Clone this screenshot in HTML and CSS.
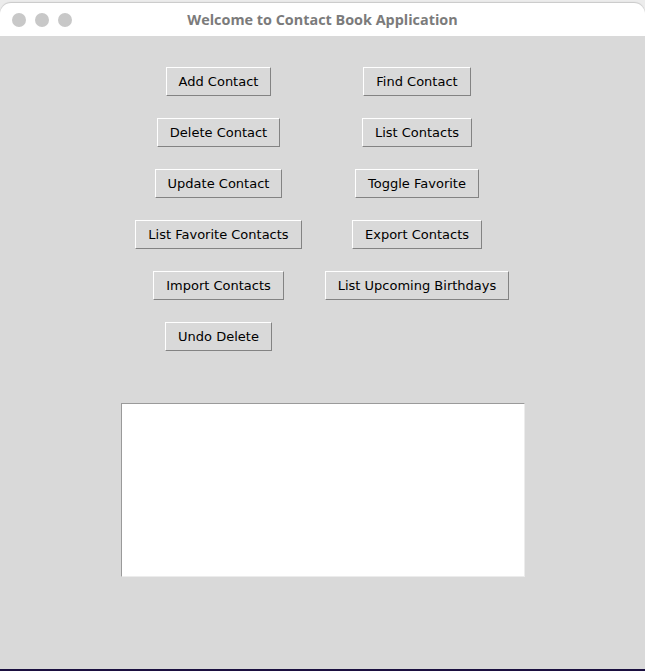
FILE: index.html
```html
<!DOCTYPE html>
<html>
<head>
<meta charset="utf-8">
<link rel="stylesheet" href="styles.css">
</head>
<body>
<div class="window">
  <div class="titlebar">
    <div class="dots"><span class="dot"></span><span class="dot"></span><span class="dot"></span></div>
    <div class="title">Welcome to Contact Book Application</div>
  </div>
  <div class="content">
    <div class="grid">
      <button class="btn">Add Contact</button>
      <button class="btn">Find Contact</button>
      <button class="btn">Delete Contact</button>
      <button class="btn">List Contacts</button>
      <button class="btn">Update Contact</button>
      <button class="btn">Toggle Favorite</button>
      <button class="btn">List Favorite Contacts</button>
      <button class="btn">Export Contacts</button>
      <button class="btn">Import Contacts</button>
      <button class="btn">List Upcoming Birthdays</button>
      <button class="btn">Undo Delete</button>
    </div>
    <div class="output"></div>
  </div>
  <div class="bottomline"></div>
</div>
</body>
</html>
```

FILE: styles.css
```css
html, body {
  margin: 0;
  padding: 0;
}
body {
  width: 645px;
  height: 671px;
  overflow: hidden;
  background: #ececec;
}
.window {
  display: flex;
  flex-direction: column;
  height: 671px;
}
.titlebar {
  position: relative;
  height: 33px;
  margin-top: 3px;
  background: #ffffff;
  border-radius: 11px 11px 0 0;
  box-shadow: 0 -1px 1px #c9c9c9;
  display: flex;
  align-items: center;
  justify-content: center;
}
.dots {
  position: absolute;
  left: 12px;
  top: 10px;
  display: flex;
  gap: 9px;
}
.dot {
  width: 14px;
  height: 14px;
  border-radius: 50%;
  background: #c8c8c8;
}
.title {
  font-family: "Open Sans", "DejaVu Sans", sans-serif;
  font-weight: 700;
  font-size: 14.4px;
  color: #7b7b7b;
  margin-top: -1px;
}
.content {
  flex: 1;
  background: #d9d9d9;
  display: flex;
  flex-direction: column;
  align-items: center;
  padding-top: 31px;
}
.grid {
  display: grid;
  grid-template-columns: 187px 210px;
  row-gap: 22px;
  justify-items: center;
  margin-left: 2px;
}
.btn {
  font-family: "DejaVu Sans", sans-serif;
  font-size: 13px;
  color: #000;
  background: #d9d9d9;
  height: 29px;
  padding: 0 12px;
  border-top: 1px solid #ffffff;
  border-left: 1px solid #ffffff;
  border-right: 1px solid #838383;
  border-bottom: 1px solid #838383;
  border-radius: 0;
  margin: 0;
}
.output {
  margin-top: 52px;
  width: 402px;
  height: 172px;
  background: #ffffff;
  border-top: 1px solid #9a9a9a;
  border-left: 1px solid #9a9a9a;
  border-right: 1px solid #ececec;
  border-bottom: 1px solid #ececec;
}
.bottomline {
  height: 2px;
  background: #1b1040;
}
```
